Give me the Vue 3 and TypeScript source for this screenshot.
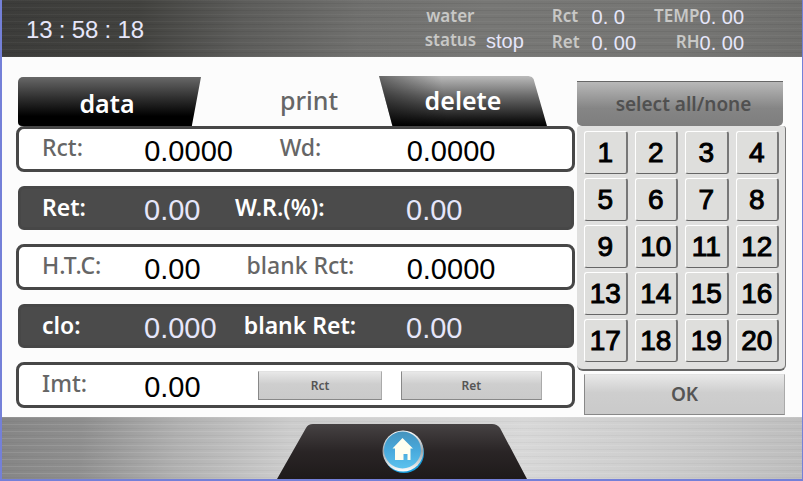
<script setup lang="ts">
interface Row {
  label: string
  value: string
  second?: string
  secondValue?: string
  dark?: boolean
  start?: boolean
}

const rows: Row[] = [
  { label: 'Rct:', value: '0.0000', second: 'Wd:', secondValue: '0.0000' },
  { label: 'Ret:', value: '0.00', second: 'W.R.(%):', secondValue: '0.00', dark: true, start: true },
  { label: 'H.T.C:', value: '0.00', second: 'blank Rct:', secondValue: '0.0000' },
  { label: 'clo:', value: '0.000', second: 'blank Ret:', secondValue: '0.00', dark: true },
  { label: 'Imt:', value: '0.00' },
]
</script>

<template>
  <div class="screen">
    <header class="top">
      <div class="clock"><span>13</span><span class="colon">:</span><span>58</span><span class="colon">:</span><span>18</span></div>
      <dl class="status">
        <div class="water"><dt>water<br />status</dt><dd>stop</dd></div>
        <div class="pair"><dt>Rct</dt><dd>0. 0</dd><dt>Ret</dt><dd>0. 00</dd></div>
        <div class="pair climate"><dt>TEMP</dt><dd>0. 00</dd><dt>RH</dt><dd>0. 00</dd></div>
      </dl>
    </header>

    <main class="body">
      <section class="left">
        <nav class="tabs">
          <button type="button" class="tab tab-data">data</button>
          <button type="button" class="tab tab-print">print</button>
          <button type="button" class="tab tab-delete">delete</button>
        </nav>
        <div class="rows">
          <div v-for="row in rows" :key="row.label" class="row" :class="{ dark: row.dark }">
            <span class="label">{{ row.label }}</span>
            <span class="value">{{ row.value }}</span>
            <template v-if="row.second">
              <span class="label second" :class="{ start: row.start }">{{ row.second }}</span>
              <span class="value">{{ row.secondValue }}</span>
            </template>
            <div v-else class="actions">
              <button type="button" class="flat">Rct</button>
              <button type="button" class="flat">Ret</button>
            </div>
          </div>
        </div>
      </section>

      <aside class="right">
        <button type="button" class="select-all">select all/none</button>
        <div class="keypad">
          <button v-for="n in 20" :key="n" type="button" class="key">{{ n }}</button>
        </div>
        <button type="button" class="flat ok">OK</button>
      </aside>
    </main>

    <footer class="bottom">
      <a href="#" class="home" aria-label="Home">
        <svg viewBox="0 0 250 55" width="250" height="55">
          <defs>
            <linearGradient id="base" x1="0" y1="0" x2="0" y2="1">
              <stop offset="0" stop-color="#464243" />
              <stop offset="0.5" stop-color="#2a2526" />
              <stop offset="1" stop-color="#1e1a1a" />
            </linearGradient>
            <linearGradient id="disc" x1="0" y1="0" x2="0" y2="1">
              <stop offset="0" stop-color="#4593bd" />
              <stop offset="0.5" stop-color="#48a9dc" />
              <stop offset="1" stop-color="#5cc2ee" />
            </linearGradient>
            <linearGradient id="rim" x1="0" y1="0" x2="0" y2="1">
              <stop offset="0" stop-color="#fff" />
              <stop offset="0.5" stop-color="#9aa5ab" />
              <stop offset="1" stop-color="#fff" />
            </linearGradient>
          </defs>
          <path d="M0 55 L29 4 Q31 0 36 0 H215 Q220 0 223 4 L250 55 Z" fill="url(#base)" />
          <circle cx="127" cy="29" r="20" fill="#189bd9" />
          <circle cx="126" cy="27" r="20.5" fill="url(#rim)" />
          <circle cx="125.5" cy="26" r="18.5" fill="url(#disc)" />
          <path d="M125.5 14 L136 24.5 H133.5 V36 H130.500 V30 H126.500 V36 H118 V24.5 H115.5 Z" fill="#fffff0" />
        </svg>
      </a>
    </footer>
  </div>
</template>

<style>
body {
  margin: 0;
}
</style>

<style scoped>
.screen {
  display: flex;
  flex-direction: column;
  box-sizing: border-box;
  min-height: 100vh;
  border: 0 solid #7480d8;
  border-width: 0 1px 2px 2px;
  background: #fcfcfc;
  font-family: "Noto Sans", "Open Sans", sans-serif;
}
button {
  margin: 0;
  padding: 0;
  border: 0;
  background: none;
  color: inherit;
  font-family: inherit;
}
.top {
  display: flex;
  justify-content: space-between;
  height: 57px;
  background:
    repeating-linear-gradient(180deg, rgba(255, 255, 255, 0.04) 0 1px, transparent 1px 3px, rgba(0, 0, 0, 0.06) 3px 4px, transparent 4px 7px),
    linear-gradient(95deg, #3c3c3a 0%, #42423f 17%, #5c5c5a 30%, #70706e 45%, #777775 60%, #767674 85%, #6e6e6c 100%);
}
.clock {
  display: flex;
  align-items: center;
  padding: 2px 0 0 24px;
  color: #e6e6fa;
  font: 24px/28px "Liberation Sans", sans-serif;
}
.colon {
  width: 19px;
  text-align: center;
}
.status {
  display: flex;
  margin: 0;
  padding: 4px 58px 0 0;
  color: #c8c8c6;
  font-size: 17px;
  font-weight: 600;
  line-height: 24px;
}
dt,
dd {
  margin: 0;
}
dd {
  color: #e6e6fa;
  font: 20px/26px "Liberation Sans", sans-serif;
}
.water {
  display: flex;
  align-items: flex-end;
  gap: 10px;
  height: 50px;
  margin-right: 28px;
  text-align: center;
}
.water dt {
  padding-bottom: 2px;
}
.pair {
  display: grid;
  grid-template-columns: auto auto;
  grid-auto-rows: 26px;
  column-gap: 12px;
  align-content: start;
  margin-right: 18px;
}
.climate {
  column-gap: 0;
  margin-right: 0;
}
.climate dt {
  text-align: right;
}
.body {
  flex: 1;
  display: grid;
  grid-template-columns: 559fr 209fr;
  gap: 2px;
  padding: 19px 16px 0 14px;
}
.tabs {
  display: grid;
  grid-template-columns: 183fr 178fr 168fr 28fr;
  height: 50px;
  padding-left: 2px;
}
.tab {
  padding-bottom: 3px;
  color: #fff;
  font-size: 25px;
  font-weight: 600;
  line-height: 30px;
}
.tab-data {
  margin-top: 1px;
  padding: 3px 5px 0 0;
  border-radius: 5px 0 0 4px;
  background: linear-gradient(#686868, #2c2c2c 45%, #000 80%);
  clip-path: polygon(0 0, 100% 0, 95% 100%, 0 100%);
}
.tab-print {
  padding-left: 38px;
  color: #666;
  font-weight: 500;
}
.tab-delete {
  background: linear-gradient(80deg, rgba(0, 0, 0, 0.5), transparent 40%), linear-gradient(#bbb, #6a6a6a 40%, #111 90%, #000);
  clip-path: polygon(0 0, 89% 0, 91% 2%, 92% 6%, 100% 100%, 8% 100%);
}
.rows {
  display: grid;
  gap: 14px;
}
.row {
  display: grid;
  grid-template-columns: 102fr 91fr 130fr 41fr 165fr;
  align-items: center;
  box-sizing: border-box;
  height: 46px;
  padding-left: 23px;
  border: 3px solid #474747;
  border-radius: 8px;
  background: #fff;
}
.row.dark {
  height: 44px;
  margin: 0 1px 0 2px;
  padding-left: 21px;
  border-radius: 6px;
  background: #4b4b4b;
}
.label {
  padding-bottom: 4px;
  color: #666;
  font-size: 23px;
  font-weight: 500;
  line-height: 28px;
  white-space: nowrap;
}
.dark .label {
  padding-bottom: 2px;
  color: #fff;
  font-weight: 600;
}
.second {
  justify-self: center;
}
.second.start {
  justify-self: start;
}
.second + .value {
  grid-column: 5;
}
.value {
  padding-top: 4px;
  color: #000;
  font: 29px/32px "Liberation Sans", sans-serif;
}
.dark .value {
  color: #e6e6fa;
}
.actions {
  grid-column: 3 / 6;
  display: grid;
  grid-template-columns: 123fr 141fr;
  gap: 19px;
  padding: 0 30px 0 23px;
}
.flat {
  height: 29px;
  border: 1px solid #aaa;
  border-color: #e2e2e2 #aaa #888 #888;
  background: linear-gradient(#e8e8e8, #cecece 45%, #cacaca);
  color: #555;
  font-size: 12px;
  font-weight: 600;
}
.right {
  display: flex;
  flex-direction: column;
  padding-top: 5px;
}
.select-all {
  height: 45px;
  margin-right: 3px;
  padding-left: 7px;
  border-top: 1px solid #666;
  border-radius: 0 0 5px 5px;
  background: linear-gradient(#b8b8b8, #858585 60%, #7e7e7e);
  color: #505050;
  font-size: 19px;
  font-weight: 600;
  line-height: 24px;
}
.keypad {
  display: grid;
  grid-template-columns: repeat(4, 1fr);
  gap: 4px 7px;
  padding: 5px 6px 7px 7px;
  border-right: 1px solid #777;
  border-bottom: 2px solid #666;
  border-radius: 3px 3px 6px 6px;
  background: #e0e0df;
}
.key {
  height: 43px;
  border: 1px solid #fff;
  border-right: 2px solid #777;
  border-bottom: 1px solid #666;
  border-radius: 3px;
  background: #dededc;
  color: #000;
  font: 28px/38px "Liberation Sans", sans-serif;
  -webkit-text-stroke: 1px #000;
}
.ok {
  height: 41px;
  margin: 3px 1px 0 7px;
  padding-bottom: 2px;
  font-size: 19px;
  line-height: 24px;
}
.bottom {
  display: flex;
  justify-content: center;
  align-items: flex-end;
  height: 62px;
  background:
    repeating-linear-gradient(180deg, rgba(255, 255, 255, 0.1) 0 1px, transparent 1px 4px, rgba(0, 0, 0, 0.03) 4px 5px, transparent 5px 7px),
    linear-gradient(95deg, #858585 0%, #8f8f8f 10%, #b0b0b0 22%, #cccccc 36%, #d8d8d8 65%, #cacaca 85%, #bdbdbd 100%);
}
.home,
.home svg {
  display: block;
}
</style>
